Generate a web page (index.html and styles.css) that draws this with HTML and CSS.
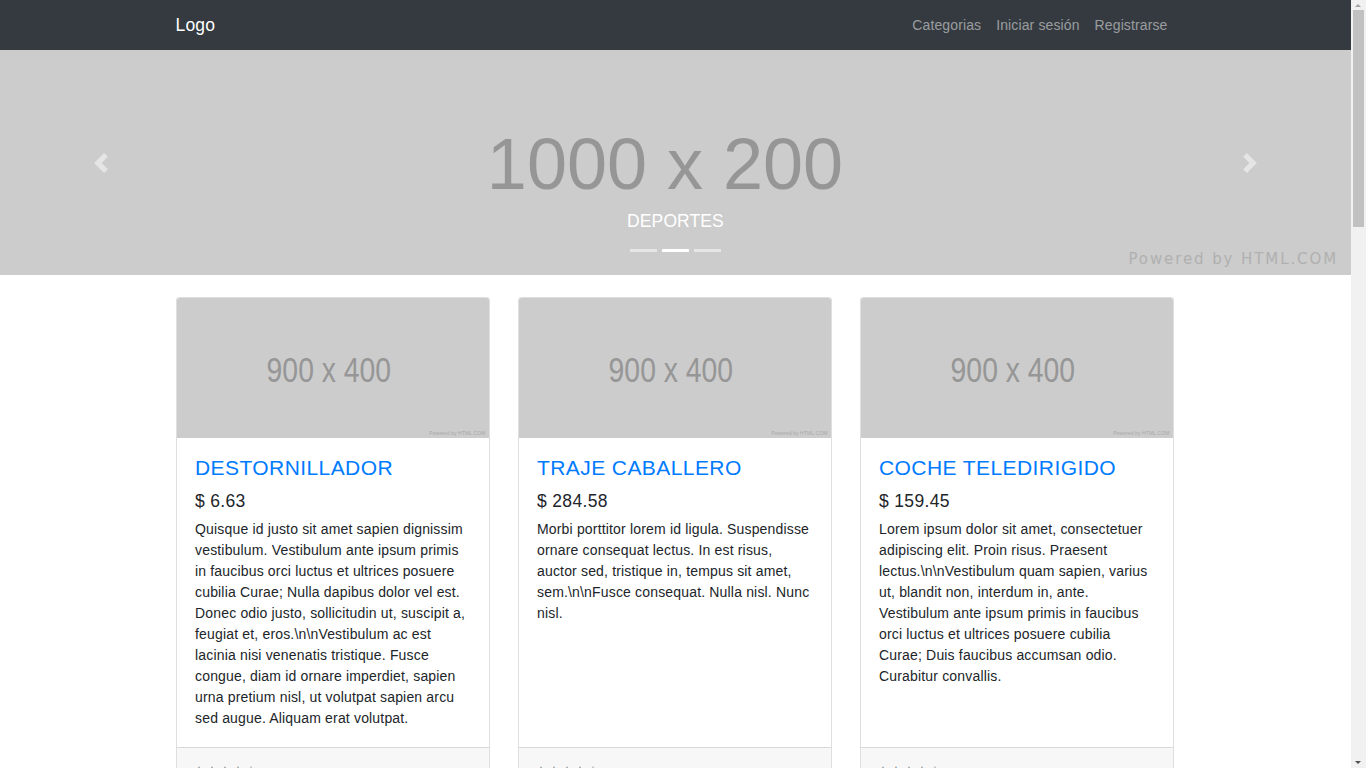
FILE: index.html
```html
<!DOCTYPE html>
<html lang="es">
<head>
<meta charset="utf-8">
<title>Tienda</title>
<link rel="stylesheet" href="styles.css">
</head>
<body>
<nav class="navbar">
  <div class="container nav-inner">
    <a class="brand" href="#">Logo</a>
    <ul class="nav-links">
      <li><a href="#">Categorias</a></li>
      <li><a href="#">Iniciar sesión</a></li>
      <li><a href="#">Registrarse</a></li>
    </ul>
  </div>
</nav>

<div class="carousel">
  <div class="slide">
    <span class="slide-size">1000 x 200</span>
    <span class="slide-powered">Powered by HTML.COM</span>
  </div>
  <div class="carousel-caption"><h5>DEPORTES</h5></div>
  <ol class="indicators">
    <li></li>
    <li class="active"></li>
    <li></li>
  </ol>
  <a class="control control-prev" href="#">
    <svg viewBox="0 0 8 8" width="20" height="20"><path fill="#fff" d="M5.25 0l-4 4 4 4 1.5-1.5-2.5-2.5 2.5-2.5-1.5-1.5z"/></svg>
  </a>
  <a class="control control-next" href="#">
    <svg viewBox="0 0 8 8" width="20" height="20"><path fill="#fff" d="M2.75 0l-1.5 1.5 2.5 2.5-2.5 2.5 1.5 1.5 4-4-4-4z"/></svg>
  </a>
</div>

<main class="container">
  <div class="grid">
    <div class="card">
      <div class="card-img"><span class="img-size">900 x 400</span><span class="img-powered">Powered by HTML.COM</span></div>
      <div class="card-body">
        <h4 class="card-title"><a href="#">DESTORNILLADOR</a></h4>
        <h5 class="price">$ 6.63</h5>
        <p class="card-text">Quisque id justo sit amet sapien dignissim vestibulum. Vestibulum ante ipsum primis in faucibus orci luctus et ultrices posuere cubilia Curae; Nulla dapibus dolor vel est. Donec odio justo, sollicitudin ut, suscipit a, feugiat et, eros.\n\nVestibulum ac est lacinia nisi venenatis tristique. Fusce congue, diam id ornare imperdiet, sapien urna pretium nisl, ut volutpat sapien arcu sed augue. Aliquam erat volutpat.</p>
      </div>
      <div class="card-footer"><small>&#9733; &#9733; &#9733; &#9733; &#9734;</small></div>
    </div>
    <div class="card">
      <div class="card-img"><span class="img-size">900 x 400</span><span class="img-powered">Powered by HTML.COM</span></div>
      <div class="card-body">
        <h4 class="card-title"><a href="#">TRAJE CABALLERO</a></h4>
        <h5 class="price">$ 284.58</h5>
        <p class="card-text">Morbi porttitor lorem id ligula. Suspendisse ornare consequat lectus. In est risus, auctor sed, tristique in, tempus sit amet, sem.\n\nFusce consequat. Nulla nisl. Nunc nisl.</p>
      </div>
      <div class="card-footer"><small>&#9733; &#9733; &#9733; &#9733; &#9734;</small></div>
    </div>
    <div class="card">
      <div class="card-img"><span class="img-size">900 x 400</span><span class="img-powered">Powered by HTML.COM</span></div>
      <div class="card-body">
        <h4 class="card-title"><a href="#">COCHE TELEDIRIGIDO</a></h4>
        <h5 class="price">$ 159.45</h5>
        <p class="card-text">Lorem ipsum dolor sit amet, consectetuer adipiscing elit. Proin risus. Praesent lectus.\n\nVestibulum quam sapien, varius ut, blandit non, interdum in, ante. Vestibulum ante ipsum primis in faucibus orci luctus et ultrices posuere cubilia Curae; Duis faucibus accumsan odio. Curabitur convallis.</p>
      </div>
      <div class="card-footer"><small>&#9733; &#9733; &#9733; &#9733; &#9734;</small></div>
    </div>
    <div class="card">
      <div class="card-img"><span class="img-size">900 x 400</span><span class="img-powered">Powered by HTML.COM</span></div>
      <div class="card-body">
        <h4 class="card-title"><a href="#">BALÓN DE FÚTBOL</a></h4>
        <h5 class="price">$ 24.90</h5>
        <p class="card-text">Duis bibendum, felis sed interdum venenatis, turpis enim blandit mi, in porttitor pede justo eu massa. Donec dapibus. Duis at velit eu est congue elementum.\n\nIn hac habitasse platea dictumst. Morbi vestibulum, velit id pretium iaculis, diam erat fermentum justo, nec condimentum neque sapien placerat ante.</p>
      </div>
      <div class="card-footer"><small>&#9733; &#9733; &#9733; &#9733; &#9734;</small></div>
    </div>
    <div class="card">
      <div class="card-img"><span class="img-size">900 x 400</span><span class="img-powered">Powered by HTML.COM</span></div>
      <div class="card-body">
        <h4 class="card-title"><a href="#">RAQUETA DE TENIS</a></h4>
        <h5 class="price">$ 89.99</h5>
        <p class="card-text">Nulla suscipit ligula in lacus. Curabitur at ipsum ac tellus semper interdum. Mauris ullamcorper purus sit amet nulla.\n\nQuisque arcu libero, rutrum ac, lobortis vel, dapibus at, diam.</p>
      </div>
      <div class="card-footer"><small>&#9733; &#9733; &#9733; &#9733; &#9734;</small></div>
    </div>
    <div class="card">
      <div class="card-img"><span class="img-size">900 x 400</span><span class="img-powered">Powered by HTML.COM</span></div>
      <div class="card-body">
        <h4 class="card-title"><a href="#">ZAPATILLAS</a></h4>
        <h5 class="price">$ 65.20</h5>
        <p class="card-text">Cras mi pede, malesuada in, imperdiet et, commodo vulputate, justo. In blandit ultrices enim. Lorem ipsum dolor sit amet, consectetuer adipiscing elit.\n\nProin interdum mauris non ligula pellentesque ultrices. Phasellus id sapien in sapien iaculis congue.</p>
      </div>
      <div class="card-footer"><small>&#9733; &#9733; &#9733; &#9733; &#9734;</small></div>
    </div>
    <div class="card">
      <div class="card-img"><span class="img-size">900 x 400</span><span class="img-powered">Powered by HTML.COM</span></div>
      <div class="card-body">
        <h4 class="card-title"><a href="#">LÁMPARA DE MESA</a></h4>
        <h5 class="price">$ 32.15</h5>
        <p class="card-text">Vivamus metus arcu, adipiscing molestie, hendrerit at, vulputate vitae, nisl. Aenean lectus. Pellentesque eget nunc.\n\nDonec quis orci eget orci vehicula condimentum. Curabitur in libero ut massa volutpat convallis.</p>
      </div>
      <div class="card-footer"><small>&#9733; &#9733; &#9733; &#9733; &#9734;</small></div>
    </div>
    <div class="card">
      <div class="card-img"><span class="img-size">900 x 400</span><span class="img-powered">Powered by HTML.COM</span></div>
      <div class="card-body">
        <h4 class="card-title"><a href="#">MOCHILA</a></h4>
        <h5 class="price">$ 41.75</h5>
        <p class="card-text">Morbi odio odio, elementum eu, interdum eu, tincidunt in, leo. Maecenas pulvinar lobortis est.\n\nPhasellus sit amet erat. Nulla tempus. Vivamus in felis eu sapien cursus vestibulum.</p>
      </div>
      <div class="card-footer"><small>&#9733; &#9733; &#9733; &#9733; &#9734;</small></div>
    </div>
    <div class="card">
      <div class="card-img"><span class="img-size">900 x 400</span><span class="img-powered">Powered by HTML.COM</span></div>
      <div class="card-body">
        <h4 class="card-title"><a href="#">AURICULARES</a></h4>
        <h5 class="price">$ 19.99</h5>
        <p class="card-text">Proin leo odio, porttitor id, consequat in, consequat ut, nulla. Sed accumsan felis. Ut at dolor quis odio consequat varius.\n\nInteger ac leo. Pellentesque ultrices mattis odio. Donec vitae nisi.</p>
      </div>
      <div class="card-footer"><small>&#9733; &#9733; &#9733; &#9733; &#9734;</small></div>
    </div>
  </div>
</main>

<footer class="footer">
  <div class="container"><p>Copyright &copy; Tienda 2020</p></div>
</footer>

<div class="scrollbar" aria-hidden="true">
  <span class="sb-up"></span>
  <span class="sb-thumb"></span>
  <span class="sb-down"></span>
</div>
</body>
</html>
```

FILE: styles.css
```css
* { box-sizing: border-box; }
html { font-size: 14px; }
body {
  margin: 0;
  padding-right: 15px;
  font-family: "Liberation Sans", Arial, sans-serif;
  font-size: 1rem;
  line-height: 1.5;
  color: #212529;
  background: #fff;
}
a { text-decoration: none; }
.container {
  max-width: 1030px;
  margin: 0 auto;
  padding: 0 15px;
}

/* navbar */
.navbar {
  background: #343a40;
  height: 50px;
}
.nav-inner {
  height: 100%;
  display: flex;
  align-items: center;
  justify-content: space-between;
}
.brand {
  color: #fff;
  font-size: 17.5px;
  line-height: 1.5;
  letter-spacing: 0.2px;
}
.nav-links {
  list-style: none;
  margin: 0;
  padding: 0;
  display: flex;
}
.nav-links a {
  display: block;
  padding: 0 7.5px;
  color: rgba(255, 255, 255, 0.5);
  font-size: 14px;
  letter-spacing: 0.12px;
}
.nav-links li:last-child a { padding-right: 8px; }

/* carousel */
.carousel {
  position: relative;
  height: 225px;
  background: #cccccc;
  overflow: hidden;
}
.slide {
  height: 100%;
  display: flex;
  align-items: center;
  justify-content: center;
  padding-right: 21px;
}
.slide-size {
  font-size: 72px;
  color: #969696;
  line-height: 1;
  padding-top: 2px;
}
.slide-powered {
  position: absolute;
  right: 13px;
  bottom: 5px;
  font-family: "DejaVu Sans", sans-serif;
  font-size: 15px;
  letter-spacing: 1.9px;
  color: #b0b0b0;
}
.carousel-caption {
  position: absolute;
  left: 15%;
  right: 15%;
  bottom: 43px;
  text-align: center;
  color: #fff;
}
.carousel-caption h5 {
  margin: 0;
  font-size: 17.5px;
  font-weight: 400;
  line-height: 1.2;
  letter-spacing: 0.1px;
}
.indicators {
  position: absolute;
  left: 0;
  right: 0;
  bottom: 23px;
  margin: 0;
  padding: 0;
  list-style: none;
  display: flex;
  justify-content: center;
}
.indicators li {
  width: 27px;
  height: 3px;
  margin: 0 2.5px;
  background: #fff;
  opacity: 0.5;
}
.indicators li.active { opacity: 1; }
.control {
  position: absolute;
  top: 0;
  bottom: 0;
  width: 15%;
  display: flex;
  align-items: center;
  justify-content: center;
  opacity: 0.5;
}
.control svg { display: block; }
.control-prev { left: 0; }
.control-next { right: 0; }

/* cards */
.grid {
  margin-top: 22px;
  display: grid;
  grid-template-columns: repeat(3, 314px);
  column-gap: 28px;
  row-gap: 21px;
}
.card {
  display: flex;
  flex-direction: column;
  border: 1px solid rgba(0, 0, 0, 0.125);
  border-radius: 3.5px;
  background: #fff;
  overflow: hidden;
}
.card-img {
  position: relative;
  height: 140px;
  background: #cccccc;
  display: flex;
  align-items: center;
  justify-content: center;
}
.img-size {
  font-size: 35px;
  line-height: 1;
  color: #969696;
  transform: scaleX(0.81);
  margin-left: -7px;
  margin-top: 2px;
}
.img-powered {
  position: absolute;
  right: 3px;
  bottom: 2px;
  font-size: 5px;
  line-height: 1;
  color: #a8a8a8;
  letter-spacing: 0.1px;
}
.card-body {
  flex: 1;
  padding: 17px 17.5px 18.5px 18.5px;
}
.card-title {
  margin: 0 0 10.5px;
  font-size: 21px;
  font-weight: 400;
  line-height: 1.2;
  letter-spacing: 0.42px;
}
.card-title a { color: #007bff; }
.price {
  margin: 0 0 7px;
  font-size: 17.5px;
  font-weight: 400;
  line-height: 1.2;
  letter-spacing: 0.33px;
}
.card-text {
  margin: 0;
  letter-spacing: 0.17px;
}
.card-footer {
  padding: 10.5px 17.5px;
  background: rgba(0, 0, 0, 0.03);
  border-top: 1px solid rgba(0, 0, 0, 0.125);
}
.card-footer small {
  font-size: 80%;
  color: #6c757d;
}

/* footer */
.footer {
  margin-top: 40px;
  padding: 42px 0;
  background: #343a40;
}
.footer p {
  margin: 0;
  text-align: center;
  color: #fff;
}

/* window scrollbar, drawn over the right edge */
.scrollbar {
  position: fixed;
  top: 0;
  right: 0;
  width: 15px;
  height: 100vh;
  background: #f1f1f1;
}
.sb-thumb {
  position: absolute;
  top: 10px;
  left: 2px;
  width: 11px;
  height: 217px;
  background: #c1c1c1;
}
.sb-up, .sb-down {
  position: absolute;
  left: 4px;
  width: 0;
  height: 0;
  border-left: 3.5px solid transparent;
  border-right: 3.5px solid transparent;
}
.sb-up {
  top: 4px;
  border-bottom: 3.5px solid #a3a3a3;
}
.sb-down {
  bottom: 4px;
  border-top: 3.5px solid #505050;
}
```
